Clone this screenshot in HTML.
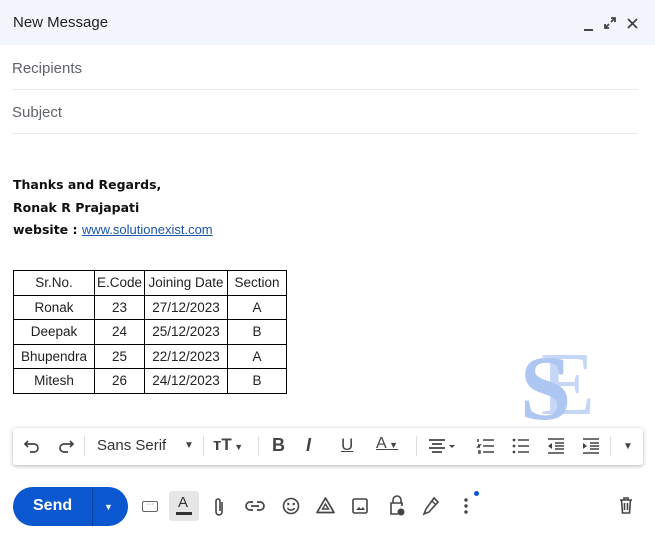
<!DOCTYPE html>
<html><head><style>
body{margin:0;width:655px;height:533px;background:#fff;font-family:"Liberation Sans",sans-serif;position:relative;overflow:hidden}
.a{position:absolute}
.hdr{left:0;top:0;width:655px;height:45px;background:#f2f6fc}
.line{height:1px;background:#e8eaed;left:12px;width:626px}
.ph{color:#5f6368;font-size:15px}
.sig{font-family:"DejaVu Sans",sans-serif;font-weight:bold;font-size:12.5px;color:#111}
table{border-collapse:collapse;font-size:13.5px;color:#222}
td{border:1px solid #000;height:23.5px;padding:0;text-align:center}
.tb{left:13px;top:428px;width:630px;height:37px;background:#fff;box-shadow:0 1px 4px rgba(0,0,0,.3);border-radius:3px}
.ic{color:#444;font-size:17px}
svg.a{overflow:visible}
</style></head><body>
<div class="a hdr"></div>
<div class="a" style="left:13px;top:14px;font-size:15px;color:#1f1f1f">New Message</div>
<div class="a" style="left:584px;top:29px;width:9px;height:2px;background:#444"></div>
<svg class="a" style="left:604px;top:17px" width="12" height="12" viewBox="0 0 12 12"><path d="M7 1h4v4M11 1L7 5M5 11H1V7M1 11l4-4" stroke="#444" stroke-width="1.8" fill="none"/></svg>
<svg class="a" style="left:627px;top:18px" width="11" height="11" viewBox="0 0 11 11"><path d="M1 1l9 9M10 1l-9 9" stroke="#444" stroke-width="1.8"/></svg>
<div class="a ph" style="left:12px;top:60px">Recipients</div>
<div class="a line" style="top:89px"></div>
<div class="a ph" style="left:12px;top:104px">Subject</div>
<div class="a line" style="top:133px"></div>
<div class="a sig" style="left:13px;top:177px">Thanks and Regards,</div>
<div class="a sig" style="left:13px;top:200px">Ronak R Prajapati</div>
<div class="a sig" style="left:13px;top:222px">website : <span style="font-weight:normal;color:#1a55a8;text-decoration:underline;font-family:'Liberation Sans',sans-serif;font-size:13px">www.solutionexist.com</span></div>
<table class="a" style="left:13px;top:270px">
<tr><td style="width:80px">Sr.No.</td><td style="width:49px">E.Code</td><td style="width:82px">Joining Date</td><td style="width:58px">Section</td></tr>
<tr><td>Ronak</td><td>23</td><td>27/12/2023</td><td>A</td></tr>
<tr><td>Deepak</td><td>24</td><td>25/12/2023</td><td>B</td></tr>
<tr><td>Bhupendra</td><td>25</td><td>22/12/2023</td><td>A</td></tr>
<tr><td>Mitesh</td><td>26</td><td>24/12/2023</td><td>B</td></tr>
</table>
<div class="a" style="left:540px;top:340px;font-family:'Liberation Serif',serif;font-size:90px;color:#c5d6f6;line-height:90px">E</div>
<div class="a" style="left:520px;top:342px;font-family:'Liberation Serif',serif;font-size:92px;color:#aec6f2;line-height:92px;font-weight:bold">S</div>
<div class="a tb"></div>
<svg class="a" style="left:24px;top:438px" width="16" height="16" viewBox="0 0 16 16"><path d="M4 3L1 6l3 3M1 6h9a4 4 0 010 8H6" stroke="#444" stroke-width="1.7" fill="none"/></svg>
<svg class="a" style="left:58px;top:438px" width="16" height="16" viewBox="0 0 16 16"><path d="M12 3l3 3-3 3M15 6H6a4 4 0 000 8h4" stroke="#444" stroke-width="1.7" fill="none"/></svg>
<div class="a" style="left:84px;top:436px;width:1px;height:20px;background:#ddd"></div>
<div class="a" style="left:97px;top:437px;font-size:15px;color:#333">Sans Serif</div>
<div class="a" style="left:184px;top:440px;font-size:10px;color:#444">▼</div>
<div class="a" style="left:203px;top:436px;width:1px;height:20px;background:#ddd"></div>
<div class="a" style="left:213px;top:435px;font-size:17px;font-weight:bold;color:#444">тT<span style="font-size:9px"> ▼</span></div>
<div class="a" style="left:258px;top:436px;width:1px;height:20px;background:#ddd"></div>
<div class="a" style="left:272px;top:435px;font-size:18px;font-weight:bold;color:#444">B</div>
<div class="a" style="left:306px;top:435px;font-size:18px;font-style:italic;font-weight:bold;color:#444">I</div>
<div class="a" style="left:341px;top:435px;font-size:17px;text-decoration:underline;color:#444">U</div>
<div class="a" style="left:376px;top:435px;font-size:16px;text-decoration:underline;color:#444">A<span style="font-size:9px;text-decoration:none"> ▼</span></div>
<div class="a" style="left:416px;top:436px;width:1px;height:20px;background:#ddd"></div>
<svg class="a" style="left:428px;top:438px" width="30" height="16" viewBox="0 0 30 16"><path d="M1 2h16M4 6h10M1 10h16M4 14h10" stroke="#444" stroke-width="1.7"/><path d="M21 7h6l-3 3z" fill="#444"/></svg>
<svg class="a" style="left:477px;top:438px" width="18" height="16" viewBox="0 0 18 16"><path d="M6 2h11M6 8h11M6 14h11M1 1v3M1 7h2l-2 2h2M1 13h2v2H1" stroke="#444" stroke-width="1.5" fill="none"/></svg>
<svg class="a" style="left:512px;top:438px" width="18" height="16" viewBox="0 0 18 16"><path d="M6 2h11M6 8h11M6 14h11" stroke="#444" stroke-width="1.6"/><circle cx="2" cy="2" r="1.4" fill="#444"/><circle cx="2" cy="8" r="1.4" fill="#444"/><circle cx="2" cy="14" r="1.4" fill="#444"/></svg>
<svg class="a" style="left:547px;top:438px" width="18" height="16" viewBox="0 0 18 16"><path d="M1 1h16M8 5h9M8 8h9M8 11h9M1 15h16" stroke="#444" stroke-width="1.6"/><path d="M5 5L1 8l4 3z" fill="#444"/></svg>
<svg class="a" style="left:582px;top:438px" width="18" height="16" viewBox="0 0 18 16"><path d="M1 1h16M8 5h9M8 8h9M8 11h9M1 15h16" stroke="#444" stroke-width="1.6"/><path d="M1 5l4 3-4 3z" fill="#444"/></svg>
<div class="a" style="left:610px;top:436px;width:1px;height:20px;background:#ddd"></div>
<div class="a" style="left:623px;top:441px;font-size:10px;color:#444">▼</div>
<div class="a" style="left:13px;top:487px;width:115px;height:39px;background:#0b57d0;border-radius:20px"></div>
<div class="a" style="left:92px;top:487px;width:1px;height:39px;background:#083f9c"></div>
<div class="a" style="left:33px;top:497px;color:#fff;font-size:16px;font-weight:bold">Send</div>
<div class="a" style="left:104px;top:502px;color:#fff;font-size:9px">▼</div>
<div class="a" style="left:142px;top:501px;width:14px;height:9px;border:1px solid #666;border-radius:2px;font-size:7px;line-height:6px;text-align:center;color:#444">···</div>
<div class="a" style="left:169px;top:491px;width:30px;height:30px;background:#e6e6e6;border-radius:3px"></div>
<div class="a" style="left:178px;top:494px;font-size:15px;color:#333">A</div>
<div class="a" style="left:176px;top:512px;width:16px;height:3px;background:#333"></div>
<svg class="a" style="left:213px;top:497px" width="12" height="20" viewBox="0 0 12 20"><path d="M9 5v10a3 3 0 01-6 0V4a2 2 0 014 0v10" stroke="#444" stroke-width="1.6" fill="none"/></svg>
<svg class="a" style="left:245px;top:500px" width="20" height="12" viewBox="0 0 20 12"><path d="M8 2H5a4 4 0 000 8h3M12 2h3a4 4 0 010 8h-3M6 6h8" stroke="#444" stroke-width="1.7" fill="none"/></svg>
<svg class="a" style="left:282px;top:497px" width="18" height="18" viewBox="0 0 18 18"><circle cx="9" cy="9" r="7.5" stroke="#444" stroke-width="1.6" fill="none"/><circle cx="6.3" cy="7" r="1.2" fill="#444"/><circle cx="11.7" cy="7" r="1.2" fill="#444"/><path d="M5.5 11a4 4 0 007 0" stroke="#444" stroke-width="1.5" fill="none"/></svg>
<svg class="a" style="left:316px;top:497px" width="19" height="17" viewBox="0 0 19 17"><path d="M9.5 1L18 15.5H1z" stroke="#444" stroke-width="1.7" fill="none" stroke-linejoin="round"/><path d="M9.5 7l3 5h-6z" stroke="#444" stroke-width="1.4" fill="none"/></svg>
<svg class="a" style="left:352px;top:498px" width="16" height="16" viewBox="0 0 16 16"><rect x="1" y="1" width="14" height="14" rx="1.5" stroke="#444" stroke-width="1.6" fill="none"/><path d="M4 12l3-3 2 2 2-2 2 3z" fill="#444"/></svg>
<svg class="a" style="left:389px;top:495px" width="16" height="22" viewBox="0 0 16 22"><path d="M4 8V5a4 4 0 018 0v3" stroke="#444" stroke-width="1.6" fill="none"/><path d="M9 19H2V8h11v3" stroke="#444" stroke-width="1.6" fill="none"/><circle cx="12" cy="17" r="3.5" fill="#444"/></svg>
<svg class="a" style="left:423px;top:497px" width="16" height="18" viewBox="0 0 16 18"><path d="M11 1l4 4-9 10-5 2 2-5z" stroke="#444" stroke-width="1.6" fill="none"/><path d="M9 4l3 3" stroke="#444" stroke-width="1.4"/></svg>
<svg class="a" style="left:464px;top:498px" width="4" height="16" viewBox="0 0 4 16"><circle cx="2" cy="2" r="1.7" fill="#444"/><circle cx="2" cy="8" r="1.7" fill="#444"/><circle cx="2" cy="14" r="1.7" fill="#444"/></svg>
<div class="a" style="left:474px;top:491px;width:5px;height:5px;border-radius:50%;background:#0b57d0"></div>
<svg class="a" style="left:619px;top:497px" width="14" height="17" viewBox="0 0 14 17"><path d="M1 3h12M5 3V1h4v2M2.5 3l1 13h7l1-13M5.5 6v7M8.5 6v7" stroke="#444" stroke-width="1.6" fill="none"/></svg>
</body></html>
